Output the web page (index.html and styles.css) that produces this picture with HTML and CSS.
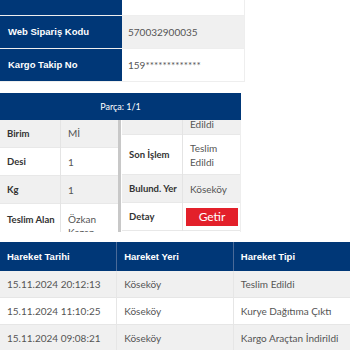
FILE: index.html
```html
<!DOCTYPE html>
<html lang="tr">
<head>
  <meta charset="UTF-8" />
  <title>Kargo Takip</title>
  <link rel="stylesheet" href="styles.css">
</head>
<body>
  <table class="info">
    <tr class="row-top">
      <td class="info-label"></td>
      <td class="info-value"></td>
    </tr>
    <tr class="row-gray">
      <td class="info-label">Web Sipariş Kodu</td>
      <td class="info-value">570032900035</td>
    </tr>
    <tr>
      <td class="info-label">Kargo Takip No</td>
      <td class="info-value">159*************</td>
    </tr>
  </table>

  <div class="parca">
    <div class="parca-head">Parça: 1/1</div>
    <div class="panels">
      <div class="panel panel-left">
        <table class="detail">
          <tr class="row-gray"><td class="d-label">Birim</td><td>Mİ</td></tr>
          <tr><td class="d-label">Desi</td><td>1</td></tr>
          <tr class="row-gray"><td class="d-label">Kg</td><td>1</td></tr>
          <tr><td class="d-label">Teslim Alan</td><td>Özkan Kazan</td></tr>
        </table>
      </div>
      <div class="scrollbar"></div>
      <div class="panel panel-right">
        <table class="detail">
          <tr class="row-gray row-cut"><td class="d-label"></td><td>Edildi</td></tr>
          <tr class="row-tall"><td class="d-label">Son İşlem</td><td>Teslim<br>Edildi</td></tr>
          <tr class="row-gray"><td class="d-label">Bulund. Yer</td><td>Köseköy</td></tr>
          <tr><td class="d-label">Detay</td><td><button class="getir">Getir</button></td></tr>
        </table>
      </div>
    </div>
  </div>

  <table class="moves">
    <thead>
      <tr>
        <th>Hareket Tarihi</th>
        <th>Hareket Yeri</th>
        <th>Hareket Tipi</th>
      </tr>
    </thead>
    <tbody>
      <tr class="row-gray"><td>15.11.2024 20:12:13</td><td>Köseköy</td><td>Teslim Edildi</td></tr>
      <tr><td>15.11.2024 11:10:25</td><td>Köseköy</td><td>Kurye Dağıtıma Çıktı</td></tr>
      <tr class="row-gray"><td>15.11.2024 09:08:21</td><td>Köseköy</td><td>Kargo Araçtan İndirildi</td></tr>
    </tbody>
  </table>
</body>
</html>
```
FILE: styles.css
```css
body {
  margin: 0;
  font-family: Lato, "Open Sans", sans-serif;
  font-size: 10px;
  color: #444;
  background: #fff;
}
table {
  border-collapse: collapse;
}
td, th {
  padding: 0;
  text-align: left;
  vertical-align: middle;
}
.row-gray {
  background: #f0f0f0;
}

/* top info block */
.info {
  width: 245px;
  border-right: 1px solid #eee;
}
.info tr {
  height: 33px;
  border-bottom: 1px solid #eee;
}
.info .row-top {
  height: 15px;
}
.info-label {
  width: 122px;
  background: #003777;
  color: #fff;
  font-family: "Liberation Sans", Arial, sans-serif;
  font-weight: bold;
  font-size: 9.5px;
  padding-left: 8px;
  box-sizing: border-box;
}
.info-value {
  padding-left: 6px;
  font-size: 10px;
  color: #555;
}

/* parca block */
.parca {
  width: 241px;
  margin-top: 11px;
}
.parca-head {
  height: 27px;
  line-height: 27px;
  background: #003777;
  color: #fff;
  text-align: center;
  font-size: 9px;
}
.panels {
  display: flex;
  height: 112px;
}
.panel {
  overflow: hidden;
}
.panel-left {
  width: 118px;
}
.scrollbar {
  width: 3px;
  background: #c8c8c8;
  margin-right: 1px;
}
.panel-right {
  flex: 1;
  border-right: 1px solid #eee;
}
.detail {
  width: 100%;
}
.detail tr {
  height: 28px;
  border-bottom: 1px solid #e8e8e8;
}
.detail td {
  padding-left: 7px;
  color: #555;
}
.detail td + td {
  border-left: 1px solid #e4e4e4;
}
.detail .d-label {
  width: 53px;
  font-weight: bold;
  color: #333;
  font-size: 9.5px;
}
.panel-left tr:last-child td {
  vertical-align: top;
  padding-top: 9px;
  line-height: 13px;
}
.row-cut {
  height: 15px !important;
}
.row-cut td {
  vertical-align: top;
  line-height: 9px;
}
.detail .row-tall {
  height: 40px;
  line-height: 14px;
}
.getir {
  display: block;
  width: 52px;
  height: 18px;
  margin-left: -4px;
  border: none;
  background: #e3202a;
  color: #fff;
  font-family: Lato, sans-serif;
  font-size: 12px;
  padding: 0;
}

/* hareket table */
.moves {
  width: 350px;
  margin-top: 10px;
  table-layout: fixed;
}
.moves th {
  height: 29px;
  background: #003777;
  color: #fff;
  font-family: "Liberation Sans", Arial, sans-serif;
  font-weight: bold;
  font-size: 9.5px;
  padding-left: 7px;
  border-left: 1px solid #4a6a98;
}
.moves th:first-child {
  border-left: none;
}
.moves td {
  height: 26px;
  padding-left: 7px;
  border-left: 1px solid #e6e6e6;
  border-bottom: 1px solid #e6e6e6;
  color: #555;
}
.moves td:first-child {
  border-left: none;
}
```
